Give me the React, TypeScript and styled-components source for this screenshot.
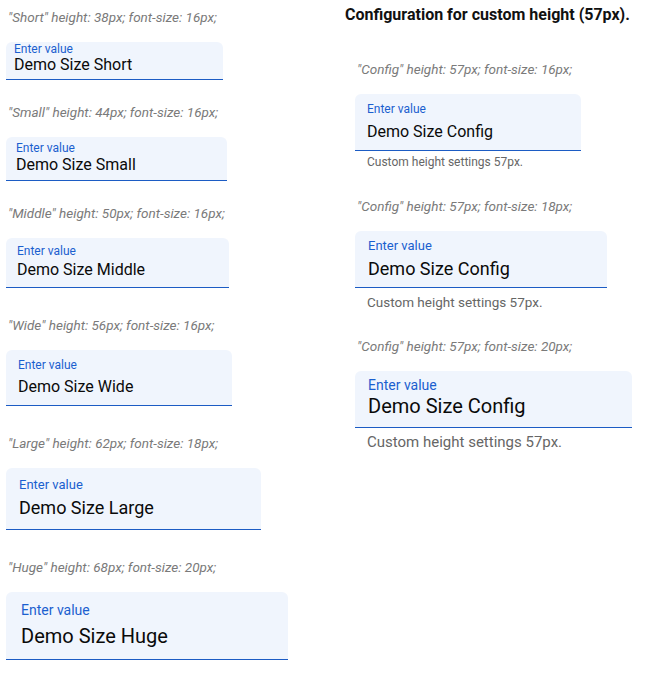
import React from "react";
import styled, { createGlobalStyle } from "styled-components";

const Global = createGlobalStyle`
  html, body { margin: 0; padding: 0; background: #ffffff; }
  body { font-family: Roboto, "Liberation Sans", Arial, sans-serif; }
`;

const Page = styled.div`
  display: grid;
  grid-template-columns: 339px 1fr;
  width: 646px;
  height: 675px;
  box-sizing: border-box;
`;

const LeftColumn = styled.div`
  display: flex;
  flex-direction: column;
  padding: 9px 0 0 6px;
`;

const RightColumn = styled.div`
  display: flex;
  flex-direction: column;
  padding: 5px 0 0 6px;
`;

const Heading = styled.h3`
  margin: 0 0 36px 0;
  font-size: 16px;
  line-height: 20px;
  font-weight: 700;
  color: #111;
`;

const ConfigList = styled.div`
  display: flex;
  flex-direction: column;
  padding-left: 10px;
`;

const Block = styled.div<{ $mb: number }>`
  display: flex;
  flex-direction: column;
  align-items: flex-start;
  margin-bottom: ${(p) => p.$mb}px;
`;

const Caption = styled.div`
  padding-left: 2px;
  margin-bottom: 17px;
  font-size: 13.5px;
  line-height: 16px;
  font-style: italic;
  color: #7a7a7a;
`;

const Field = styled.div<{
  $h: number;
  $w: number;
  $pt: number;
  $px: number;
}>`
  display: flex;
  flex-direction: column;
  box-sizing: border-box;
  height: ${(p) => p.$h}px;
  width: ${(p) => p.$w}px;
  padding: ${(p) => p.$pt}px ${(p) => p.$px}px 0;
  background: #f0f5fd;
  border-radius: 6px 6px 0 0;
  border-bottom: 1px solid #1c5cc4;
`;

const Label = styled.label<{ $fs: number }>`
  font-size: ${(p) => p.$fs}px;
  line-height: ${(p) => p.$fs}px;
  color: #1b5fcf;
`;

const Value = styled.div<{ $fs: number; $gap: number }>`
  margin-top: ${(p) => p.$gap}px;
  font-size: ${(p) => p.$fs}px;
  line-height: ${(p) => Math.round(p.$fs * 1.2)}px;
  color: #0a0a0a;
`;

const Helper = styled.div<{ $fs: number; $mt: number }>`
  margin-top: ${(p) => p.$mt}px;
  padding-left: 12px;
  font-size: ${(p) => p.$fs}px;
  line-height: ${(p) => Math.round(p.$fs * 1.2)}px;
  color: #666;
`;

type Spec = {
  caption: string;
  value: string;
  h: number;
  w: number;
  pt: number;
  px: number;
  lfs: number;
  vfs: number;
  gap: number;
  mb: number;
  helper?: { fs: number; mt: number };
};

const leftSpecs: Spec[] = [
  { caption: '"Short" height: 38px; font-size: 16px;', value: "Demo Size Short", h: 38, w: 217, pt: 1, px: 8, lfs: 12, vfs: 16, gap: 0, mb: 24 },
  { caption: '"Small" height: 44px; font-size: 16px;', value: "Demo Size Small", h: 44, w: 221, pt: 5, px: 10, lfs: 12, vfs: 16, gap: 0.5, mb: 24 },
  { caption: '"Middle" height: 50px; font-size: 16px;', value: "Demo Size Middle", h: 50, w: 223, pt: 7, px: 11, lfs: 12, vfs: 16, gap: 2.5, mb: 29 },
  { caption: '"Wide" height: 56px; font-size: 16px;', value: "Demo Size Wide", h: 56, w: 226, pt: 9, px: 12, lfs: 12, vfs: 16, gap: 5.5, mb: 29 },
  { caption: '"Large" height: 62px; font-size: 18px;', value: "Demo Size Large", h: 62, w: 255, pt: 10, px: 13, lfs: 13, vfs: 18, gap: 5.5, mb: 29 },
  { caption: '"Huge" height: 68px; font-size: 20px;', value: "Demo Size Huge", h: 68, w: 282, pt: 11, px: 15, lfs: 14, vfs: 20, gap: 6.5, mb: 0 },
];

const rightSpecs: Spec[] = [
  { caption: '"Config" height: 57px; font-size: 16px;', value: "Demo Size Config", h: 57, w: 226, pt: 9, px: 12, lfs: 12, vfs: 16, gap: 6.5, mb: 29, helper: { fs: 12, mt: 4 } },
  { caption: '"Config" height: 57px; font-size: 18px;', value: "Demo Size Config", h: 57, w: 252, pt: 8, px: 13, lfs: 13, vfs: 18, gap: 5.5, mb: 28, helper: { fs: 13.5, mt: 6 } },
  { caption: '"Config" height: 57px; font-size: 20px;', value: "Demo Size Config", h: 57, w: 277, pt: 7, px: 13, lfs: 14, vfs: 20, gap: 2, mb: 0, helper: { fs: 15, mt: 5 } },
];

function DemoField({ s }: { s: Spec }) {
  return (
    <Block $mb={s.mb}>
      <Caption>{s.caption}</Caption>
      <Field $h={s.h} $w={s.w} $pt={s.pt} $px={s.px}>
        <Label $fs={s.lfs}>Enter value</Label>
        <Value $fs={s.vfs} $gap={s.gap}>{s.value}</Value>
      </Field>
      {s.helper && (
        <Helper $fs={s.helper.fs} $mt={s.helper.mt}>
          Custom height settings 57px.
        </Helper>
      )}
    </Block>
  );
}

export default function App() {
  return (
    <>
      <Global />
      <Page>
        <LeftColumn>
          {leftSpecs.map((s) => (
            <DemoField key={s.caption} s={s} />
          ))}
        </LeftColumn>
        <RightColumn>
          <Heading>Configuration for custom height (57px).</Heading>
          <ConfigList>
            {rightSpecs.map((s) => (
              <DemoField key={s.caption} s={s} />
            ))}
          </ConfigList>
        </RightColumn>
      </Page>
    </>
  );
}
